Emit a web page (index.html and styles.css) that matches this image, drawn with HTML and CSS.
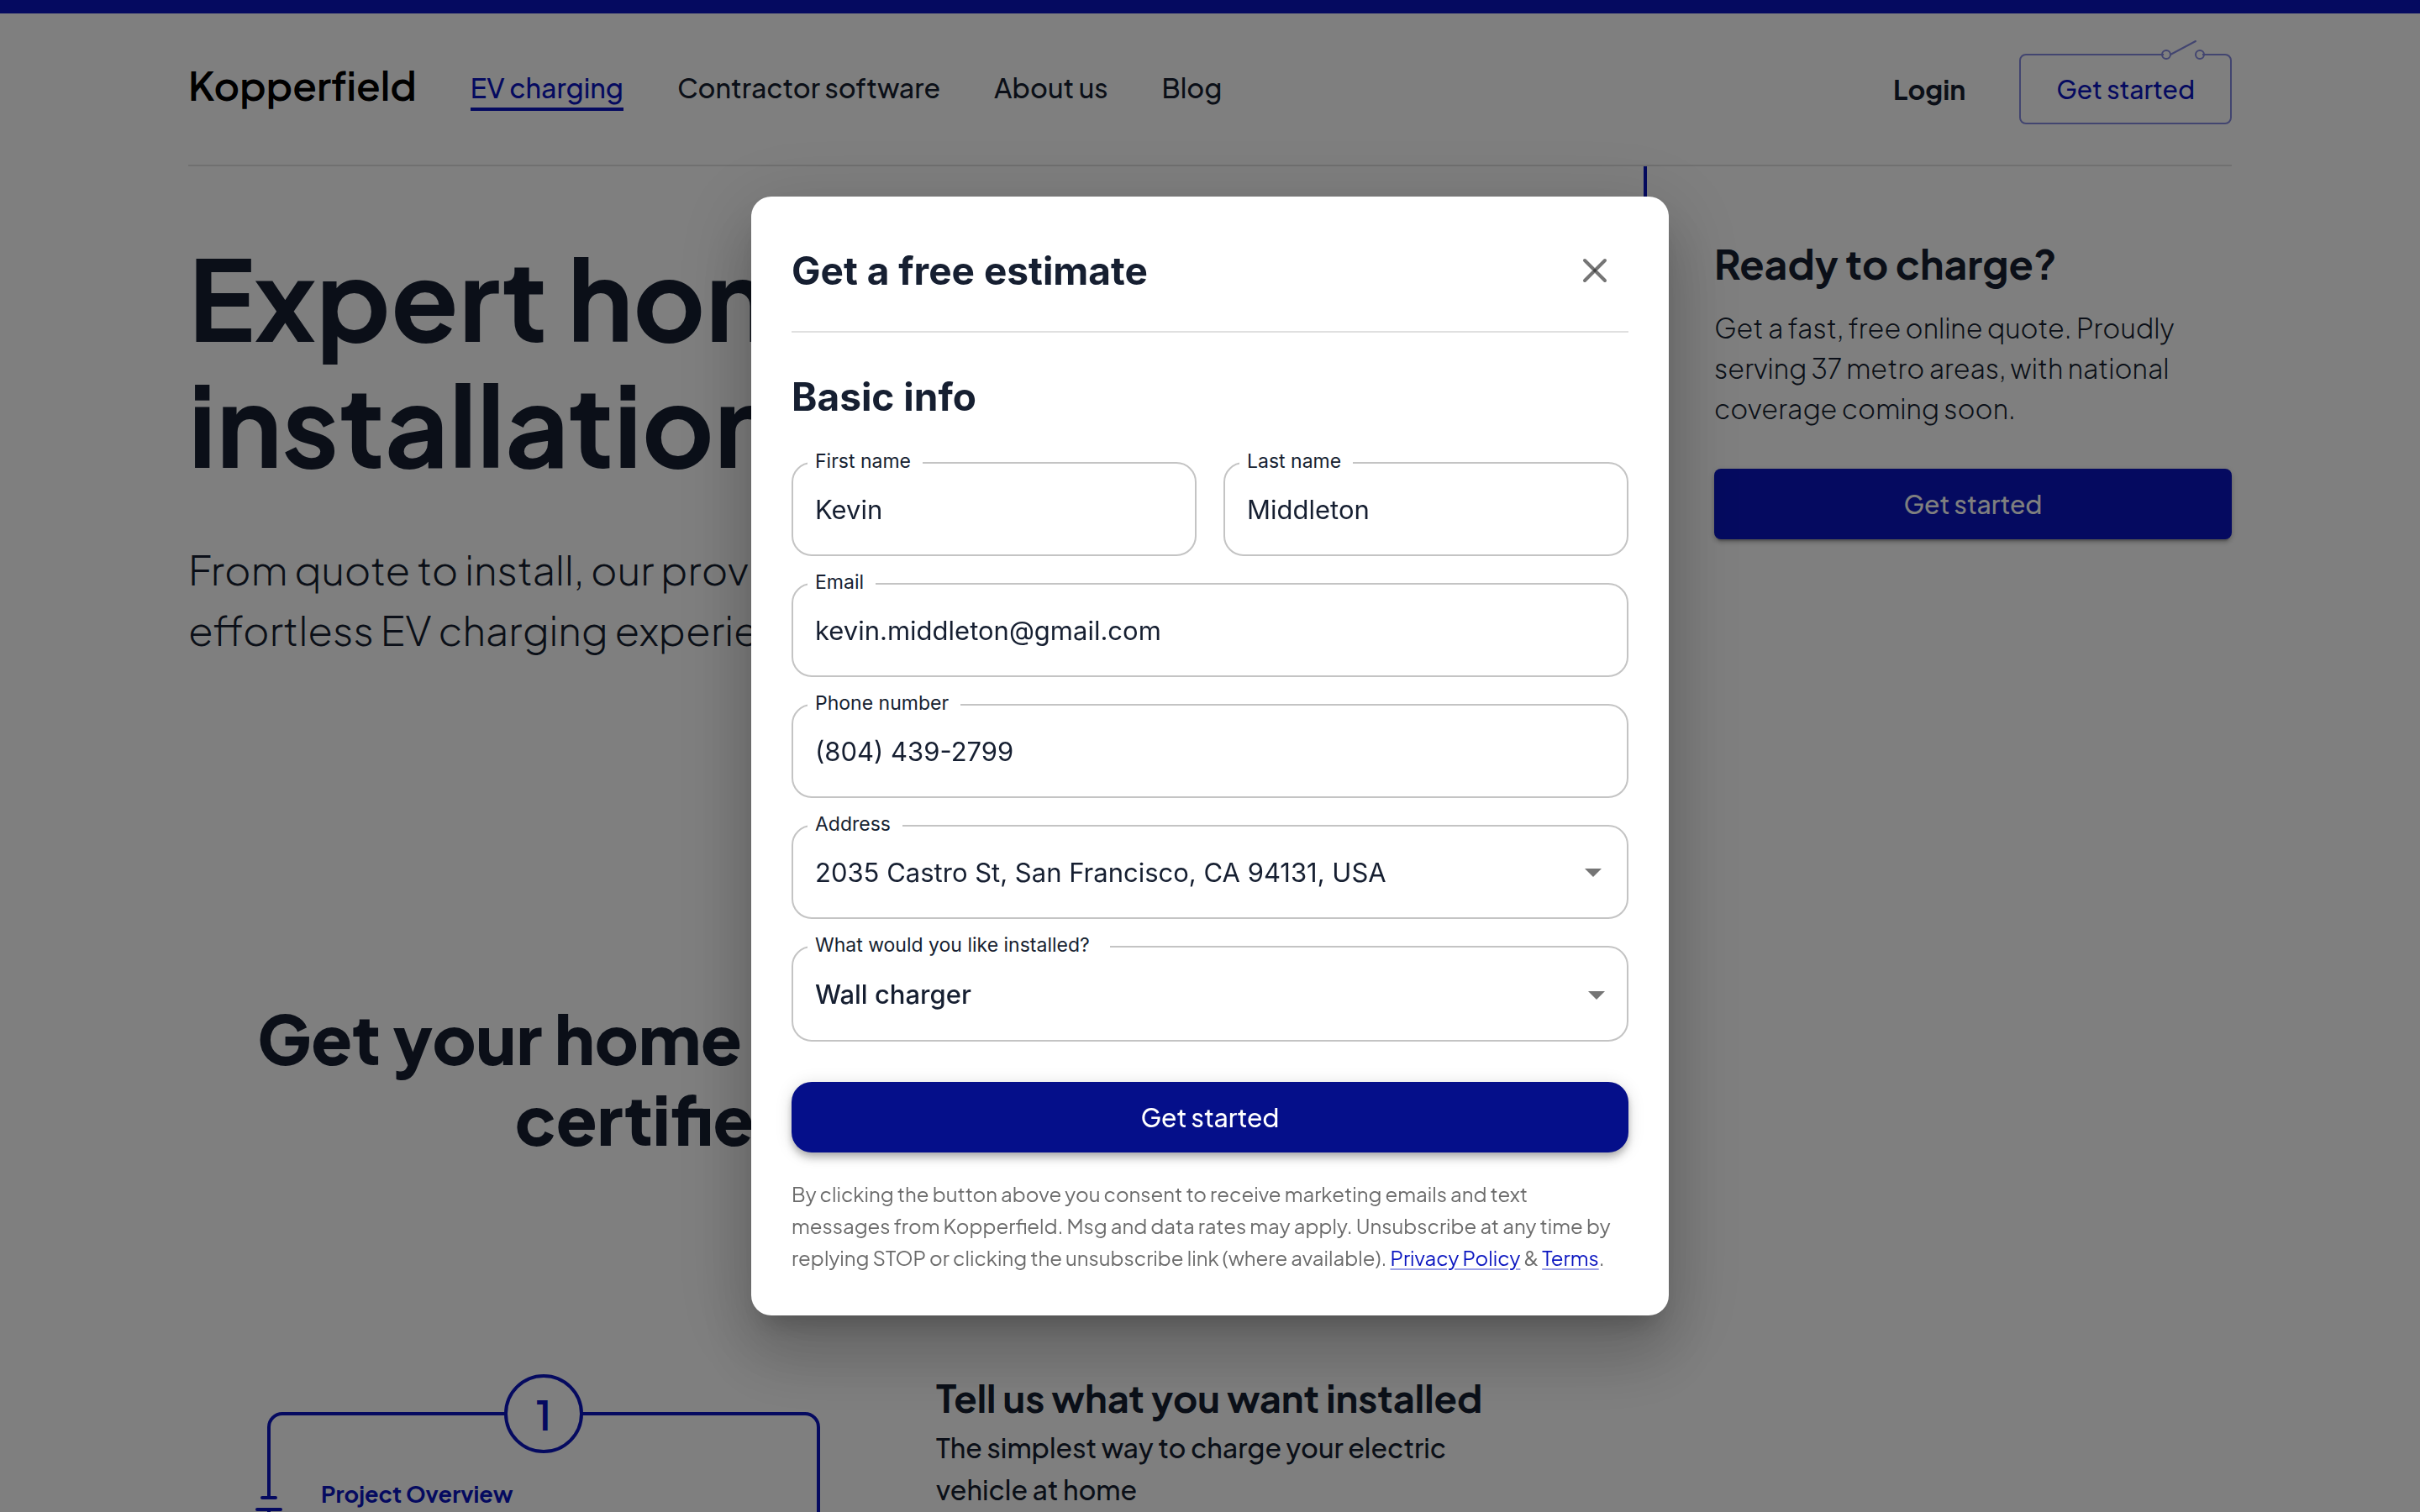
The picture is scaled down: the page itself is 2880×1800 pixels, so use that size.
FILE: index.html
```html
<!DOCTYPE html>
<html lang="en">
<head>
<meta charset="utf-8">
<meta name="viewport" content="width=device-width, initial-scale=1">
<title>Kopperfield – EV charging</title>
<link rel="stylesheet" href="styles.css">
</head>
<body>
<div class="page">
  <div class="top-bar"></div>
  <div class="container">
    <header class="header">
      <a class="logo" href="#">Kopperfield</a>
      <nav class="nav">
        <a class="nav-link nav-link-active" href="#">EV charging</a>
        <a class="nav-link" href="#">Contractor software</a>
        <a class="nav-link" href="#">About us</a>
        <a class="nav-link" href="#">Blog</a>
      </nav>
      <a class="login" href="#">Login</a>
      <button class="outline-button" type="button">Get started
        <svg class="switch-icon" viewBox="0 0 54 28" width="54" height="28" fill="none" stroke="currentColor" stroke-width="2" stroke-linecap="round" aria-hidden="true">
          <path class="switch-gap" d="M7 18H47"/>
          <circle cx="7" cy="18" r="5"/>
          <circle cx="47" cy="18" r="5"/>
          <path d="M12 18 42 2"/>
        </svg>
      </button>
    </header>
    <div class="columns">
      <main class="main">
        <h1 class="hero-title">Expert home EV<br>installation</h1>
        <p class="hero-text">From quote to install, our providers make for an<br>effortless EV charging experience.</p>
        <h2 class="steps-title">Get your home EV charger fitted with a<br>certified EV electrician</h2>
        <section class="step">
          <div class="step-visual">
            <div class="step-number">1</div>
            <div class="step-frame">
              <svg class="capacitor" viewBox="0 0 36 24" width="36" height="24" fill="none" stroke="currentColor" stroke-width="4" stroke-linecap="round" aria-hidden="true">
                <path class="capacitor-gap" d="M18 5V18"/>
                <path d="M10 4H26M4 18H32"/>
              </svg>
              <p class="frame-title">Project Overview</p>
            </div>
          </div>
          <div class="step-copy">
            <h3 class="step-title">Tell us what you want installed</h3>
            <p class="step-text">The simplest way to charge your electric<br>vehicle at home</p>
          </div>
        </section>
      </main>
      <aside class="aside">
        <h2 class="aside-title">Ready to charge?</h2>
        <p class="aside-text">Get a fast, free online quote. Proudly serving 37 metro areas, with national coverage coming soon.</p>
        <button class="solid-button" type="button">Get started</button>
      </aside>
    </div>
  </div>
</div>

<div class="backdrop">
  <div class="modal" role="dialog" aria-modal="true" aria-labelledby="modal-title">
    <div class="modal-header">
      <h2 class="modal-title" id="modal-title">Get a free estimate</h2>
      <button class="close-button" type="button" aria-label="Close">
        <svg viewBox="0 0 32 32" width="32" height="32" fill="none" stroke-width="4" stroke-linecap="round" aria-hidden="true">
          <path stroke="#757575" d="M4 4 28 28M28 4 4 28"/>
          <circle cx="16" cy="16" r="2" fill="#424242"/>
        </svg>
      </button>
    </div>
    <form class="form">
      <h3 class="modal-title form-title">Basic info</h3>
      <div class="fields">
        <div class="field">
          <label class="field-label" for="first">First name</label>
          <input class="field-input" id="first" type="text" value="Kevin">
        </div>
        <div class="field">
          <label class="field-label" for="last">Last name</label>
          <input class="field-input" id="last" type="text" value="Middleton">
        </div>
        <div class="field field-wide">
          <label class="field-label" for="email">Email</label>
          <input class="field-input" id="email" type="email" value="kevin.middleton@gmail.com">
        </div>
        <div class="field field-wide">
          <label class="field-label" for="phone">Phone number</label>
          <input class="field-input" id="phone" type="tel" value="(804) 439-2799">
        </div>
        <div class="field field-wide">
          <label class="field-label" for="address">Address</label>
          <input class="field-input" id="address" type="text" value="2035 Castro St, San Francisco, CA 94131, USA">
          <svg class="arrow arrow-inset" viewBox="0 0 20 10" width="20" height="10" aria-hidden="true"><path d="M0 0H20L10 10z"/></svg>
        </div>
        <div class="field field-wide">
          <label class="field-label field-label-loose" for="install">What would you like installed?</label>
          <select class="field-input field-select" id="install">
            <option>Wall charger</option>
          </select>
          <svg class="arrow" viewBox="0 0 20 10" width="20" height="10" aria-hidden="true"><path d="M0 0H20L10 10z"/></svg>
        </div>
      </div>
      <button class="solid-button submit-button" type="submit">Get started</button>
      <p class="consent">By clicking the button above you consent to receive marketing emails and text<br>messages from Kopperfield. Msg and data rates may apply. Unsubscribe at any time by<br>replying STOP or clicking the unsubscribe link (where available). <a class="consent-link" href="#">Privacy Policy</a> &amp; <a class="consent-link" href="#">Terms</a>.</p>
    </form>
  </div>
</div>
</body>
</html>
```

FILE: styles.css
```css
:root {
  --blue: #0a15c0;
  --blue-dark: #050f8a;
  --ink: #161f31;
  --line: #e0e0e0;
  --field-line: #c4c4c4;
}

* {
  box-sizing: border-box;
}

body {
  margin: 0;
  height: 100vh;
  overflow: hidden;
  background: #fff;
  color: var(--ink);
  font-family: "Plus Jakarta Sans", Inter, sans-serif;
  font-size: 32px;
}

h1, h2, h3, p {
  margin: 0;
}

a {
  color: inherit;
  text-decoration: none;
}

button, input, select {
  font: inherit;
  color: inherit;
}

.top-bar {
  height: 16px;
  background: var(--blue);
}

.container {
  padding: 0 224px;
}

/* Header */
.header {
  display: flex;
  align-items: center;
  gap: 64px;
  padding: 48px 0;
  border-bottom: 2px solid var(--line);
}

.logo {
  padding-bottom: 10px;
  color: #000;
  font-size: 47px;
  font-weight: 600;
  font-variant-ligatures: none;
  line-height: 56px;
}

.nav {
  display: flex;
  flex: 1;
  gap: 64px;
}

.nav-link {
  padding: 4px 0;
  border-bottom: 4px solid transparent;
  font-weight: 500;
  line-height: 40px;
}

.nav-link-active {
  border-color: var(--blue);
  color: var(--blue);
}

.login {
  font-weight: 700;
  line-height: 40px;
}

.outline-button {
  position: relative;
  height: 84px;
  padding: 0 42px;
  border: 2px solid #858ae0;
  border-radius: 8px;
  background: none;
  color: var(--blue);
  font-size: 30px;
  font-weight: 500;
}

.switch-icon {
  position: absolute;
  top: -19px;
  right: 29px;
  color: #858ae0;
}

.switch-gap {
  stroke: #fff;
  stroke-width: 6px;
}

/* Page body */
.columns {
  display: flex;
  align-items: flex-start;
}

.main {
  flex: 1;
  padding: 80px 66px 0 0;
}

.hero-title {
  font-size: 132px;
  font-weight: 700;
  line-height: 150px;
}

.hero-text {
  margin-top: 64px;
  font-size: 48px;
  font-weight: 300;
  line-height: 72px;
}

.steps-title {
  margin-top: 402px;
  font-size: 80px;
  font-weight: 800;
  line-height: 96px;
  text-align: center;
}

.step {
  display: flex;
  gap: 138px;
  margin-top: 256px;
  padding-left: 94px;
}

.step-visual {
  display: flex;
  flex-direction: column;
  align-items: center;
  width: 658px;
  color: var(--blue);
}

.step-number {
  display: grid;
  place-items: center;
  z-index: 1;
  width: 94px;
  height: 94px;
  margin-bottom: -49px;
  border: 4px solid;
  border-radius: 50%;
  background: #fff;
  font-size: 48px;
  font-weight: 600;
}

.step-frame {
  position: relative;
  align-self: stretch;
  height: 400px;
  padding: 75px 60px;
  border: 4px solid;
  border-radius: 18px;
}

.capacitor {
  position: absolute;
  top: 94px;
  left: -20px;
}

.capacitor-gap {
  stroke: #fff;
  stroke-width: 8px;
  stroke-linecap: butt;
}

.frame-title {
  font-size: 27px;
  font-weight: 700;
  line-height: 36px;
}

.aside-title {
  font-size: 48px;
  font-weight: 700;
  line-height: 56px;
}

.step-title {
  font-size: 45px;
  font-weight: 700;
  line-height: 56px;
}

.step-text {
  margin-top: 6px;
  font-weight: 500;
  line-height: 50px;
}

.aside {
  width: 700px;
  min-height: 1000px;
  padding: 88px 0 0 80px;
  border-left: 4px solid var(--blue);
}

.aside-text {
  margin: 24px 0 48px;
  font-weight: 300;
  line-height: 48px;
}

.solid-button {
  display: block;
  width: 100%;
  height: 84px;
  border: 0;
  border-radius: 8px;
  background: var(--blue);
  color: #fff;
  font-size: 30px;
  font-weight: 500;
  box-shadow: 0 6px 2px -4px #0003, 0 4px 4px #0002, 0 2px 10px #0002;
}

/* Dialog */
.backdrop {
  position: fixed;
  z-index: 10;
  inset: 0;
  display: flex;
  align-items: center;
  justify-content: center;
  background: rgba(0, 0, 0, 0.5);
}

.modal {
  width: 1092px;
  max-width: 100%;
  padding: 48px;
  border-radius: 24px;
  background: #fff;
  box-shadow: 0 22px 30px -14px rgba(0, 0, 0, 0.2),
    0 48px 76px 6px rgba(0, 0, 0, 0.14),
    0 18px 92px 16px rgba(0, 0, 0, 0.12);
}

.modal-header {
  display: flex;
  align-items: center;
  justify-content: space-between;
  padding-bottom: 32px;
  border-bottom: 2px solid var(--line);
}

.modal-title {
  font-family: Inter, sans-serif;
  font-size: 46px;
  font-weight: 700;
  line-height: 56px;
}

.close-button {
  display: grid;
  place-items: center;
  width: 80px;
  height: 80px;
  padding: 0;
  border: 0;
  background: none;
}

.form-title {
  margin: 48px 0 50px;
}

.fields {
  display: grid;
  grid-template-columns: 1fr 1fr;
  gap: 32px;
  font-family: Inter, sans-serif;
  font-size: 31px;
}

.field {
  position: relative;
}

.field-wide {
  grid-column: 1 / -1;
}

.field-label {
  position: absolute;
  top: -17px;
  left: 19px;
  padding: 0 14px 0 9px;
  background: #fff;
  font-size: 23px;
  line-height: 32px;
}

.field-label-loose {
  padding-right: 24px;
}

.field-input {
  display: block;
  width: 100%;
  height: 112px;
  padding: 0 26px;
  border: 2px solid var(--field-line);
  border-radius: 24px;
  background: none;
  outline: 0;
}

.field-select {
  height: 114px;
  appearance: none;
  font-weight: 500;
}

.arrow {
  position: absolute;
  top: 54px;
  right: 28px;
  fill: #757575;
  pointer-events: none;
}

.arrow-inset {
  top: 52px;
  right: 32px;
}

.submit-button {
  margin: 48px 0 30px;
  border-radius: 24px;
  background: var(--blue-dark);
  box-shadow: 0 4px 8px -2px #0003, 0 8px 10px #0002, 0 2px 20px #0002;
}

.consent {
  padding-bottom: 2px;
  color: #6b6b6b;
  font-size: 24px;
  line-height: 38px;
}

.consent-link {
  color: var(--blue);
  text-decoration: underline 2px #9da1e6;
  text-underline-offset: 3px;
}
```
